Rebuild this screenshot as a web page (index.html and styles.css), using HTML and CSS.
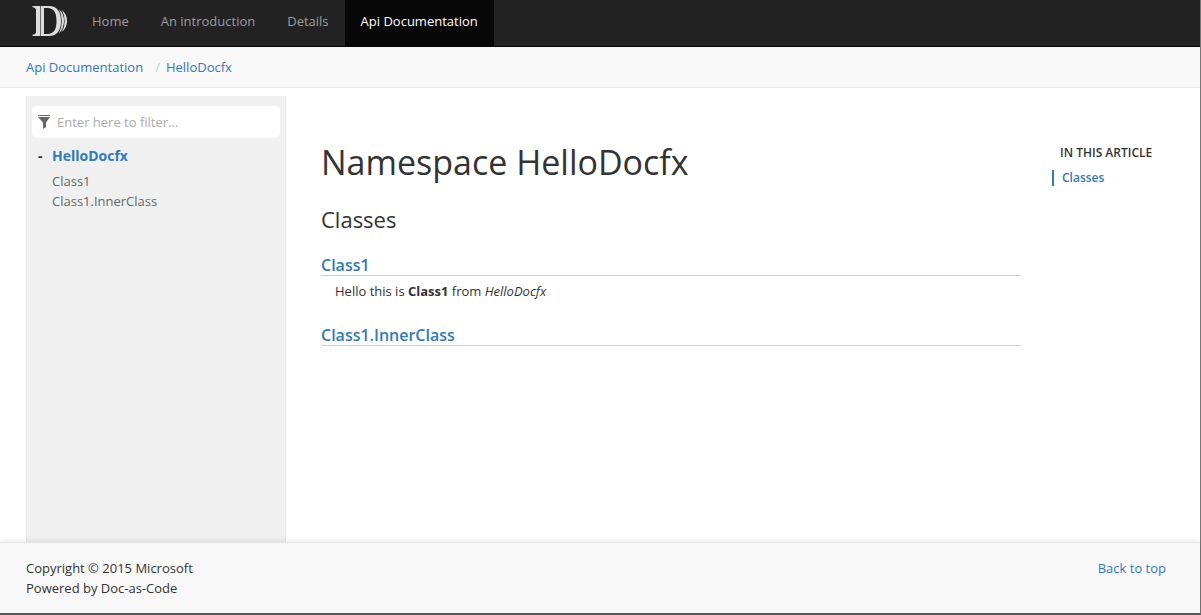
FILE: index.html
```html
<!DOCTYPE html>
<html lang="en">
<head>
<meta charset="utf-8">
<title>Namespace HelloDocfx</title>
<link rel="stylesheet" href="styles.css">
</head>
<body>
<div class="page" id="top">
  <header>
    <nav class="navbar" aria-label="Main">
      <a class="brand" href="#" aria-label="Home page">
        <svg class="logo" viewBox="0 0 35 30" aria-hidden="true">
          <path fill="#ddd" d="M0.500 0H8V30H0.500V28.800Q4 28.300 4 26V4Q4 1.700 0.500 1.200Z"/>
          <path fill="#ddd" fill-rule="evenodd" d="M8.600 0H17C25 0 29 6 29 15S25 30 17 30H8.600ZM12 2V28H15.500C22 28 24.500 23 24.500 15S22 2 15.500 2Z"/>
          <path fill="#ddd" d="M27 3Q32 8 32 15T27 27.500Q29.800 21 29.800 15T27 3Z"/>
          <path fill="#ddd" d="M29.800 4Q35 8 35 15T29.800 26Q32.700 21 32.700 15T29.800 4Z"/>
        </svg>
      </a>
      <ul class="menu">
        <li><a href="#">Home</a></li>
        <li><a href="#">An introduction</a></li>
        <li><a href="#">Details</a></li>
        <li><a class="active" href="#" aria-current="page">Api Documentation</a></li>
      </ul>
    </nav>
    <nav class="subnav" aria-label="Breadcrumb">
      <ol class="breadcrumb">
        <li><a href="#">Api Documentation</a></li>
        <li><a href="#">HelloDocfx</a></li>
      </ol>
    </nav>
  </header>
  <div class="body">
    <aside class="sidebar">
      <label class="filter">
        <svg class="funnel" viewBox="0 0 12 14" aria-hidden="true">
          <path fill="#666" d="M0 0H12V1H0ZM0 2H12L8 7.500V12L5 14V7.500Z"/>
        </svg>
        <input class="filter-input" type="text" placeholder="Enter here to filter..." aria-label="Filter">
      </label>
      <ul class="toc">
        <li>
          <div class="toc-root"><span class="toggle">-</span><a href="#">HelloDocfx</a></div>
          <ul class="toc-children">
            <li><a href="#">Class1</a></li>
            <li><a href="#">Class1.InnerClass</a></li>
          </ul>
        </li>
      </ul>
    </aside>
    <main class="article">
      <h1>Namespace HelloDocfx</h1>
      <h2 id="classes">Classes</h2>
      <h3><a href="#">Class1</a></h3>
      <p class="summary">Hello this is <strong>Class1</strong> from <em>HelloDocfx</em></p>
      <h3><a href="#">Class1.InnerClass</a></h3>
    </main>
    <nav class="affix" aria-labelledby="affix-title">
      <h4 id="affix-title">In This Article</h4>
      <a class="affix-link" href="#classes">Classes</a>
    </nav>
  </div>
  <footer class="footer">
    <p>Copyright © 2015 Microsoft<br>Powered by Doc-as-Code</p>
    <a href="#top">Back to top</a>
  </footer>
</div>
</body>
</html>
```
FILE: styles.css
```css
* { box-sizing: border-box; }
body {
  margin: 0;
  color: #333;
  background: #fff;
  font: 13px/20px "Open Sans", "Noto Sans", sans-serif;
}
a { color: #337ab7; text-decoration: none; }
ul, ol { list-style: none; margin: 0; padding: 0; }
h1, h2, h3, h4, p { margin: 0; }

.page {
  min-height: 100vh;
  display: flex;
  flex-direction: column;
  border-right: 1px solid #777;
  border-bottom: 2px solid #5c5c5c;
}
.navbar {
  display: flex;
  height: 47px;
  background: #222;
  border-bottom: 1px solid #080808;
  padding-left: 32px;
}
.brand { padding: 6px 9px 0 0; }
.logo { display: block; width: 35px; height: 30px; }
.menu { display: flex; }
.menu a {
  display: block;
  height: 46px;
  padding: 11px 16px;
  color: #9d9d9d;
}
.menu .active { color: #fff; background: #080808; }
.subnav {
  background: #f8f8f8;
  border-bottom: 1px solid #e7e7e7;
  padding: 10px 26px;
}
.breadcrumb { display: flex; }
.breadcrumb li + li::before { content: "/"; color: #ccc; padding: 0 6px 0 12px; }

.body {
  flex: 1;
  display: flex;
  padding: 8px 34px 0 26px;
}
.sidebar {
  flex: none;
  width: 260px;
  padding: 10px 5px;
  background: #f0f0f0;
  border: 1px solid #e7e7e7;
  border-width: 0 1px;
}
.filter {
  display: flex;
  align-items: center;
  height: 32px;
  padding-left: 6px;
  gap: 7px;
  background: #fff;
  border-radius: 5px;
}
.funnel { flex: none; width: 12px; height: 14px; }
.filter-input {
  flex: 1;
  min-width: 0;
  border: 0;
  padding: 0;
  background: none;
  font: inherit;
  color: #555;
}
.filter-input::placeholder { color: #aaa; opacity: 1; }
.toc { padding: 8px 0 0 6px; }
.toc-root { display: flex; font-size: 14px; font-weight: 700; }
.toggle { width: 14px; }
.toc-children { padding: 5px 0 0 14px; }
.toc-children a { color: #666; }

.article {
  flex: 1;
  padding: 44px 0 40px 35px;
}
h1 { font-size: 34px; line-height: 44px; font-weight: 400; }
h2 { margin-top: 19px; font-size: 22px; line-height: 32px; font-weight: 400; }
h3 {
  margin-top: 21px;
  border-bottom: 1px solid #ccc;
  font-size: 16px;
  line-height: 19px;
  font-weight: 600;
}
.summary { margin: 5px 14px 0; }
.summary + h3 { margin-top: 25px; }
.affix { flex: none; width: 146px; padding: 47px 0 0 32px; font-size: 12px; font-weight: 600; }
h4 { padding-left: 8px; font-size: 12px; line-height: 20px; font-weight: 600; text-transform: uppercase; white-space: nowrap; }
.affix-link {
  display: block;
  margin-top: 7px;
  padding-left: 8px;
  border-left: 2px solid #337ab7;
  line-height: 16px;
}
.footer {
  display: flex;
  justify-content: space-between;
  padding: 15px 34px 15px 26px;
  background: #f8f8f8;
  border-top: 1px solid #e7e7e7;
  box-shadow: 0 0 6px rgba(0, 0, 0, .12);
}
```
